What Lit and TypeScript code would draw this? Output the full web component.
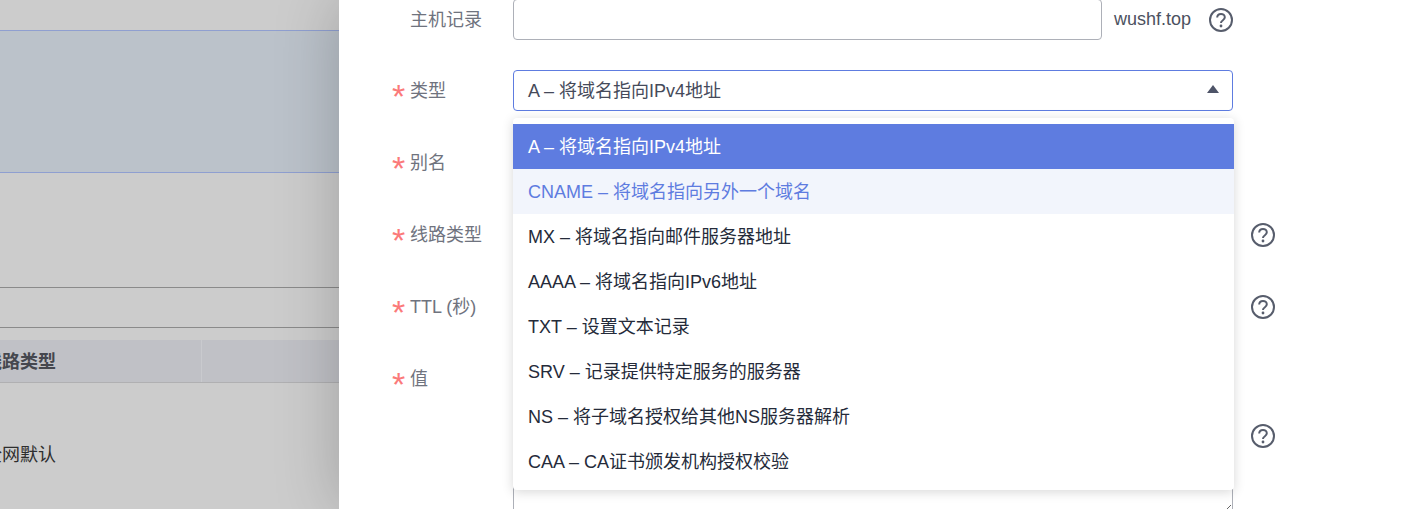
import { LitElement, html, css } from 'lit'
import { customElement } from 'lit/decorators.js'

const options = [
    'A – 将域名指向IPv4地址',
    'CNAME – 将域名指向另外一个域名',
    'MX – 将域名指向邮件服务器地址',
    'AAAA – 将域名指向IPv6地址',
    'TXT – 设置文本记录',
    'SRV – 记录提供特定服务的服务器',
    'NS – 将子域名授权给其他NS服务器解析',
    'CAA – CA证书颁发机构授权校验',
]

const helpIcon = html`
    <svg class="help" width="24" height="24" viewBox="0 0 24 24" fill="none">
        <circle cx="12" cy="12" r="11" stroke="currentColor" stroke-width="2"></circle>
        <path d="M8.2 9.6c0-2.3 1.7-3.7 3.8-3.7s3.8 1.4 3.8 3.4c0 1.6-.9 2.3-1.9 3-1 .7-1.9 1.2-1.9 2.7" stroke="currentColor" stroke-width="2"></path>
        <circle cx="12" cy="18" r="1.4" fill="currentColor"></circle>
    </svg>
`

@customElement('app-root')
export class AppRoot extends LitElement {
    static styles = css`
        :host {
            display: flex;
            width: 1403px;
            height: 509px;
            overflow: hidden;
            font-family: "Liberation Sans", "Noto Sans CJK SC", sans-serif;
            background: #cccccc;
        }
        .page {
            width: 339px;
            flex: none;
            font-size: 18px;
            color: #2e2e2e;
        }
        .band {
            height: 141px;
            margin-top: 30px;
            background: #bbc2ca;
            border-top: 1px solid #8f9fd0;
            border-bottom: 1px solid #8f9fd0;
        }
        .rule {
            height: 39px;
            border-top: 1px solid #8a8a8a;
        }
        .rule.first {
            height: 39px;
            margin-top: 114px;
        }
        .rule.second {
            height: 12px;
        }
        .thead {
            display: flex;
            height: 42px;
            background: #c0c1c6;
            border-bottom: 1px solid #b0b0b2;
            font-weight: bold;
            color: #45474e;
        }
        .th {
            display: flex;
            align-items: center;
            width: 218px;
            margin-left: -16px;
            padding-bottom: 2px;
            box-sizing: border-box;
            border-right: 1px solid #c9cace;
            flex: none;
        }
        .cell {
            margin: 60px 0 0 -16px;
            line-height: 24px;
        }
        .drawer {
            position: relative;
            flex: 1;
            padding-left: 53px;
            margin-top: -1px;
            background: #fff;
            box-shadow: 0 0 60px rgba(0, 0, 0, 0.22);
            font-size: 18px;
        }
        .row {
            display: flex;
            align-items: center;
            height: 41px;
            margin-bottom: 31px;
        }
        .row.top {
            margin-bottom: 30px;
        }
        .row.tall {
            height: 156px;
            margin-bottom: 0;
            align-items: flex-start;
        }
        .label {
            display: flex;
            align-items: center;
            width: 121px;
            height: 41px;
            flex: none;
            color: #6f737e;
            padding-left: 19px;
            box-sizing: border-box;
        }
        .label.required {
            padding-left: 0;
        }
        .label-text {
            padding-bottom: 4px;
            margin-left: -1px;
        }
        .star {
            width: 19px;
            flex: none;
            height: 41px;
            padding-top: 6px;
            box-sizing: border-box;
            color: #fb7a7a;
            font-size: 34px;
            line-height: 41px;
        }
        input,
        textarea {
            display: block;
            box-sizing: border-box;
            background: #fff;
            border: 1px solid #adb0b8;
            border-radius: 4px;
            outline: none;
            margin: 0;
            padding: 0 14px;
        }
        .host-input {
            width: 589px;
            height: 41px;
        }
        .suffix {
            margin-left: 12px;
            color: #4c5160;
        }
        .help {
            flex: none;
            margin-left: 18px;
            color: #575d6c;
        }
        .control {
            position: relative;
            width: 720px;
            height: 41px;
            flex: none;
        }
        .blank {
            width: 100%;
            height: 41px;
        }
        .select {
            display: flex;
            align-items: center;
            justify-content: space-between;
            box-sizing: border-box;
            height: 41px;
            padding: 0 13px 0 14px;
            border: 1px solid #5e7ce0;
            border-radius: 4px;
            color: #454a5a;
        }
        .select-text {
            padding-bottom: 4px;
        }
        .arrow {
            width: 0;
            height: 0;
            margin-bottom: 3px;
            border-left: 6.5px solid transparent;
            border-right: 6.5px solid transparent;
            border-bottom: 8px solid #4e5468;
        }
        .menu {
            position: absolute;
            top: 48px;
            left: 0;
            z-index: 2;
            width: 721px;
            box-sizing: border-box;
            padding: 6px 0;
            background: #fff;
            border-radius: 4px;
            box-shadow: 0 2px 12px rgba(0, 0, 0, 0.16);
        }
        .option {
            display: flex;
            align-items: center;
            box-sizing: border-box;
            height: 45px;
            padding: 0 0 4px 15px;
            color: #252b3a;
        }
        .option.selected {
            background: #5e7ce0;
            color: #fff;
        }
        .option.hover {
            background: #f2f5fc;
            color: #5e7ce0;
        }
        .area-wrap {
            height: 156px;
            display: flex;
            align-items: center;
        }
        textarea {
            width: 720px;
            height: 156px;
            resize: vertical;
        }
    `

    private _label(text: string, required = true) {
        return html`
            <div class="label ${required ? 'required' : ''}">
                ${required ? html`<span class="star">*</span>` : ''}<span class="label-text">${text}</span>
            </div>
        `
    }

    protected override render() {
        return html`
            <div class="page">
                <div class="band"></div>
                <div class="rule first"></div>
                <div class="rule second"></div>
                <div class="thead">
                    <div class="th">线路类型</div>
                </div>
                <div class="cell">全网默认</div>
            </div>
            <div class="drawer">
                <div class="row top">
                    ${this._label('主机记录', false)}
                    <input class="host-input" />
                    <span class="suffix">wushf.top</span>
                    ${helpIcon}
                </div>
                <div class="row">
                    ${this._label('类型')}
                    <div class="control">
                        <div class="select">
                            <span class="select-text">${options[0]}</span>
                            <span class="arrow"></span>
                        </div>
                        <div class="menu">
                            ${options.map((o, i) => html`
                                <div class="option ${i === 0 ? 'selected' : ''} ${i === 1 ? 'hover' : ''}">${o}</div>
                            `)}
                        </div>
                    </div>
                </div>
                <div class="row">
                    ${this._label('别名')}
                    <div class="control"><input class="blank" /></div>
                </div>
                <div class="row">
                    ${this._label('线路类型')}
                    <div class="control"><input class="blank" /></div>
                    ${helpIcon}
                </div>
                <div class="row">
                    ${this._label('TTL (秒)')}
                    <div class="control"><input class="blank" /></div>
                    ${helpIcon}
                </div>
                <div class="row tall">
                    ${this._label('值')}
                    <div class="area-wrap">
                        <textarea></textarea>
                        ${helpIcon}
                    </div>
                </div>
            </div>
        `
    }
}

declare global {
    interface HTMLElementTagNameMap {
        'app-root': AppRoot
    }
}
